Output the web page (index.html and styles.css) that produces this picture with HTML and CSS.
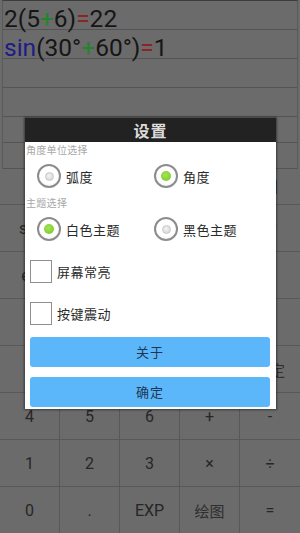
FILE: index.html
```html
<!DOCTYPE html>
<html>
<head>
<meta charset="utf-8">
<link rel="stylesheet" href="styles.css">
</head>
<body>
<div class="app">
  <div class="display">
    <div class="line"><span>2(5</span><span class="op">+</span><span>6)</span><span class="eq">=</span><span>22</span></div>
    <div class="line"><span class="fn">sin</span><span>(30°</span><span class="op">+</span><span>60°)</span><span class="eq">=</span><span>1</span></div>
    <div class="line"></div>
    <div class="line"></div>
    <div class="line short"></div>
    <div class="line short"></div>
  </div>
  <div class="keys">
    <div class="key top">(</div><div class="key top"></div><div class="key top"></div><div class="key top"></div><div class="key top">|x|</div>
    <div class="key">sin</div><div class="key"></div><div class="key"></div><div class="key"></div><div class="key">x³</div>
    <div class="key">ex</div><div class="key"></div><div class="key"></div><div class="key"></div><div class="key"></div>
    <div class="key"></div><div class="key"></div><div class="key"></div><div class="key"></div><div class="key"></div>
    <div class="key">7</div><div class="key">8</div><div class="key">9</div><div class="key"></div><div class="key cjk">设定</div>
    <div class="key">4</div><div class="key">5</div><div class="key">6</div><div class="key">+</div><div class="key">-</div>
    <div class="key">1</div><div class="key">2</div><div class="key">3</div><div class="key">×</div><div class="key">÷</div>
    <div class="key">0</div><div class="key">.</div><div class="key">EXP</div><div class="key cjk">绘图</div><div class="key">=</div>
  </div>

  <div class="dialog">
    <div class="dtitle">设置</div>
    <div class="dbody">
      <div class="section">角度单位选择</div>
      <div class="radios r1">
        <div class="opt"><span class="radio"><span class="dot"></span></span><span class="lbl">弧度</span></div>
        <div class="opt"><span class="radio on"><span class="dot"></span></span><span class="lbl">角度</span></div>
      </div>
      <div class="section s2">主题选择</div>
      <div class="radios r2">
        <div class="opt"><span class="radio on"><span class="dot"></span></span><span class="lbl">白色主题</span></div>
        <div class="opt"><span class="radio"><span class="dot"></span></span><span class="lbl">黑色主题</span></div>
      </div>
      <div class="check c1"><span class="box"></span><span class="lbl">屏幕常亮</span></div>
      <div class="check c2"><span class="box"></span><span class="lbl">按键震动</span></div>
      <div class="btn b1">关于</div>
      <div class="btn b2">确定</div>
    </div>
  </div>
</div>
</body>
</html>
```
FILE: styles.css
```css
html, body {
  margin: 0;
  padding: 0;
}
body {
  width: 300px;
  height: 533px;
  overflow: hidden;
  background: #6b6b6b;
  font-family: Roboto, "Noto Sans CJK SC", sans-serif;
}
.app {
  position: relative;
  width: 300px;
  height: 533px;
}
.display {
  border-top: 1px solid #3c3c3c;
  margin: 0 2px;
  border-left: 1px solid #5a5a5a;
  border-right: 1px solid #5a5a5a;
}
.line {
  height: 24px;
  padding-top: 4px;
  border-bottom: 1px solid #545454;
  font-size: 24.5px;
  line-height: 28px;
  color: #161616;
  padding-left: 1px;
  white-space: nowrap;
}
.line.short {
  height: 21px;
}
.fn { color: #1e1c86; }
.op { color: #24842a; }
.eq { color: #8c2424; }
.keys {
  display: grid;
  grid-template-columns: repeat(5, 60px);
  grid-template-rows: 36px repeat(7, 47px);
}
.key {
  border-right: 1px solid #585858;
  border-bottom: 1px solid #585858;
  display: flex;
  align-items: center;
  justify-content: center;
  font-size: 16px;
  color: #262626;
}
.key:nth-child(5n) {
  border-right: none;
}
.key.cjk {
  font-family: "Noto Sans CJK SC", sans-serif;
  font-size: 15px;
  color: #2e2e2e;
}
.dialog {
  position: absolute;
  left: 25px;
  top: 118px;
  width: 251px;
  height: 291px;
  background: #fff;
  box-shadow: 0 0 2px 1px rgba(0, 0, 0, 0.45);
  font-family: "Noto Sans CJK SC", sans-serif;
}
.dtitle {
  height: 24px;
  background: #222;
  color: #dcdcdc;
  font-size: 16px;
  font-weight: bold;
  line-height: 24px;
  text-align: center;
  letter-spacing: 1px;
}
.dbody {
  display: flex;
  flex-direction: column;
}
.section {
  height: 16px;
  line-height: 16px;
  font-size: 10px;
  color: #a8a8a8;
  padding-left: 1px;
  letter-spacing: 0.3px;
}
.section.s2 {
  height: 18px;
  line-height: 18px;
}
.radios {
  display: grid;
  grid-template-columns: 117px 1fr;
  align-items: center;
}
.radios.r1 { height: 36px; }
.radios.r2 { height: 34px; }
.opt {
  display: flex;
  align-items: center;
  padding-left: 12px;
  gap: 5px;
}
.radio {
  width: 20px;
  height: 20px;
  border: 2px solid #8c8c8c;
  border-radius: 50%;
  background: radial-gradient(circle at 50% 40%, #ffffff 55%, #ececec 100%);
  display: flex;
  align-items: center;
  justify-content: center;
}
.radio .dot {
  width: 7px;
  height: 7px;
  border-radius: 50%;
  background: radial-gradient(circle at 45% 40%, #f4f4f4, #cfcfcf);
  border: 1px solid #c8c8c8;
}
.radio.on .dot {
  width: 10px;
  height: 10px;
  border: none;
  background: radial-gradient(circle at 45% 40%, #a6e45a, #74c41e);
}
.lbl {
  font-size: 13px;
  color: #2a2a2a;
  letter-spacing: 0.5px;
}
.check {
  display: flex;
  align-items: center;
  padding-left: 5px;
  gap: 5px;
}
.check.c1 { height: 47px; padding-top: 2px; }
.check.c2 { height: 37px; }
.box {
  width: 20px;
  height: 21px;
  border: 1.5px solid #8f8f8f;
  background: #fff;
}
.btn {
  margin: 0 6px 0 5px;
  height: 30px;
  background: #5bb7fa;
  border-radius: 3px;
  color: #1e3650;
  font-size: 13px;
  line-height: 30px;
  text-align: center;
  letter-spacing: 1px;
}
.btn.b1 { margin-top: 5px; }
.btn.b2 { margin-top: 10px; }
```
